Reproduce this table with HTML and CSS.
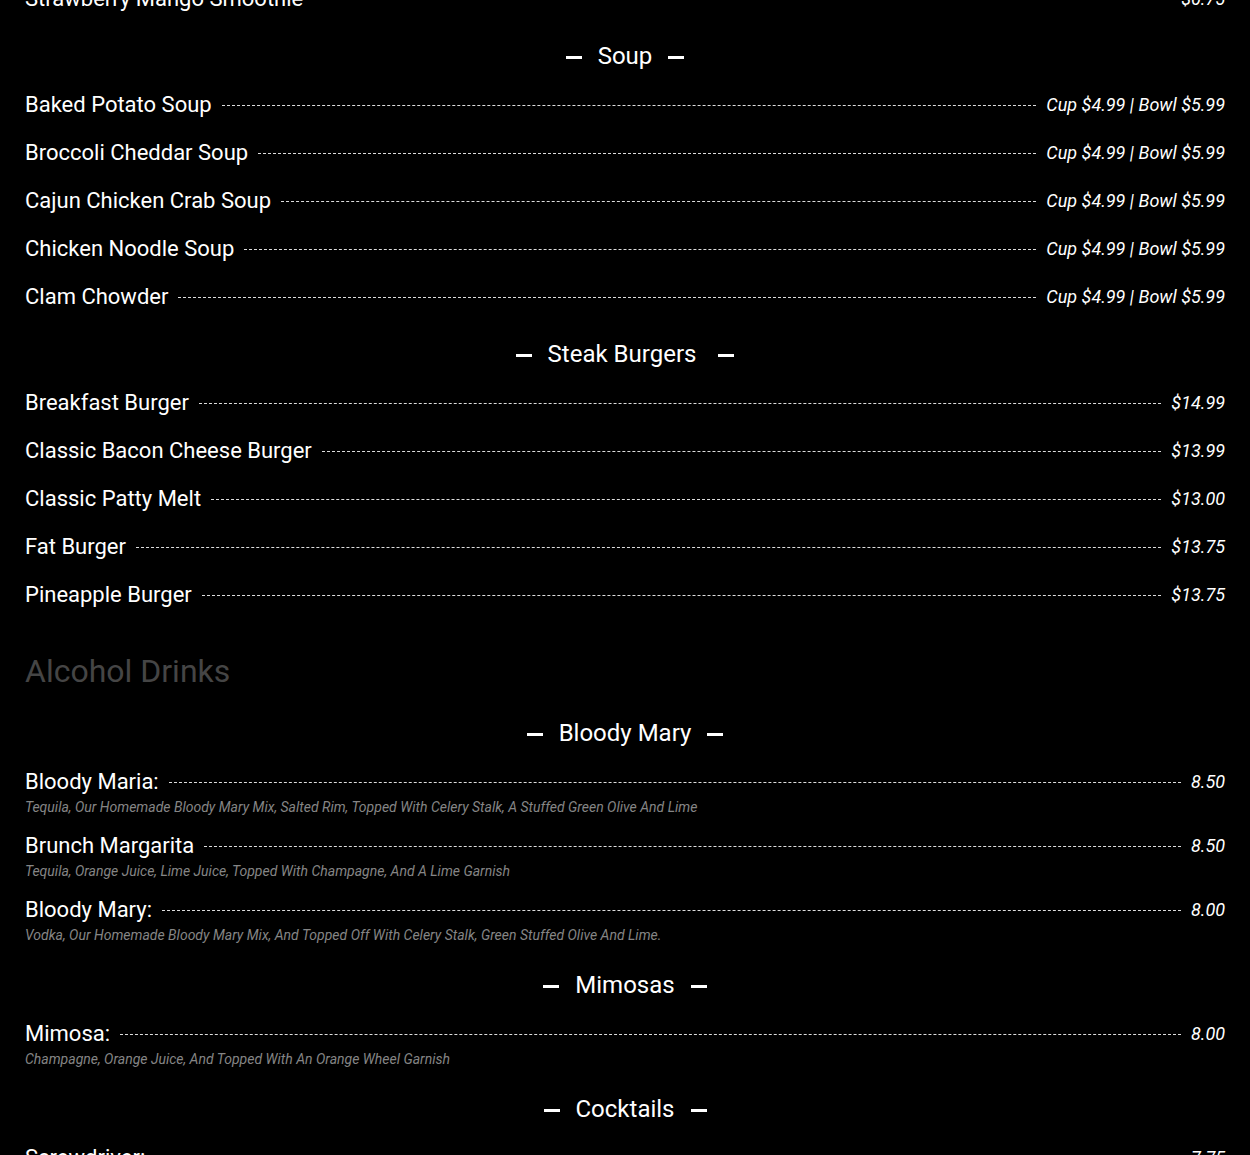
FILE: index.html
```html
<!DOCTYPE html>
<html lang="en">
<head>
<meta charset="utf-8">
<title>Menu</title>
<link rel="stylesheet" href="styles.css">
</head>
<body>
<main class="page">
  <section class="section">
    <ul class="list">
      <li class="item"><div class="row"><span class="name">Strawberry Mango Smoothie</span><span class="dots"></span><span class="price">$6.75</span></div></li>
    </ul>
  </section>

  <section class="section">
    <h3 class="cat">Soup</h3>
    <ul class="list">
      <li class="item"><div class="row"><span class="name">Baked Potato Soup</span><span class="dots"></span><span class="price">Cup $4.99 | Bowl $5.99</span></div></li>
      <li class="item"><div class="row"><span class="name">Broccoli Cheddar Soup</span><span class="dots"></span><span class="price">Cup $4.99 | Bowl $5.99</span></div></li>
      <li class="item"><div class="row"><span class="name">Cajun Chicken Crab Soup</span><span class="dots"></span><span class="price">Cup $4.99 | Bowl $5.99</span></div></li>
      <li class="item"><div class="row"><span class="name">Chicken Noodle Soup</span><span class="dots"></span><span class="price">Cup $4.99 | Bowl $5.99</span></div></li>
      <li class="item"><div class="row"><span class="name">Clam Chowder</span><span class="dots"></span><span class="price">Cup $4.99 | Bowl $5.99</span></div></li>
    </ul>
  </section>

  <section class="section">
    <h3 class="cat">Steak Burgers&nbsp;</h3>
    <ul class="list">
      <li class="item"><div class="row"><span class="name">Breakfast Burger</span><span class="dots"></span><span class="price">$14.99</span></div></li>
      <li class="item"><div class="row"><span class="name">Classic Bacon Cheese Burger</span><span class="dots"></span><span class="price">$13.99</span></div></li>
      <li class="item"><div class="row"><span class="name">Classic Patty Melt</span><span class="dots"></span><span class="price">$13.00</span></div></li>
      <li class="item"><div class="row"><span class="name">Fat Burger</span><span class="dots"></span><span class="price">$13.75</span></div></li>
      <li class="item"><div class="row"><span class="name">Pineapple Burger</span><span class="dots"></span><span class="price">$13.75</span></div></li>
    </ul>
  </section>

  <h2 class="group">Alcohol Drinks</h2>

  <section class="section section-desc">
    <h3 class="cat">Bloody Mary</h3>
    <ul class="list list-desc">
      <li class="item"><div class="row"><span class="name">Bloody Maria:</span><span class="dots"></span><span class="price">8.50</span></div><p class="desc">Tequila, Our Homemade Bloody Mary Mix, Salted Rim, Topped With Celery Stalk, A Stuffed Green Olive And Lime</p></li>
      <li class="item"><div class="row"><span class="name">Brunch Margarita</span><span class="dots"></span><span class="price">8.50</span></div><p class="desc">Tequila, Orange Juice, Lime Juice, Topped With Champagne, And A Lime Garnish</p></li>
      <li class="item"><div class="row"><span class="name">Bloody Mary:</span><span class="dots"></span><span class="price">8.00</span></div><p class="desc">Vodka, Our Homemade Bloody Mary Mix, And Topped Off With Celery Stalk, Green Stuffed Olive And Lime.</p></li>
    </ul>
  </section>

  <section class="section section-desc">
    <h3 class="cat">Mimosas</h3>
    <ul class="list list-desc">
      <li class="item"><div class="row"><span class="name">Mimosa:</span><span class="dots"></span><span class="price">8.00</span></div><p class="desc">Champagne, Orange Juice, And Topped With An Orange Wheel Garnish</p></li>
    </ul>
  </section>

  <section class="section section-desc">
    <h3 class="cat">Cocktails</h3>
    <ul class="list list-desc">
      <li class="item"><div class="row"><span class="name">Screwdriver:</span><span class="dots"></span><span class="price">7.75</span></div><p class="desc">Vodka And Orange Juice</p></li>
    </ul>
  </section>
</main>
</body>
</html>
```

FILE: styles.css
```css
html, body {
  margin: 0;
  padding: 0;
  background: #000;
}

body {
  font-family: Roboto, "Liberation Sans", sans-serif;
  color: #fff;
  overflow: hidden;
}

.page {
  margin-top: -15px;
  padding: 0 25px;
  display: flex;
  flex-direction: column;
}

.section {
  display: flex;
  flex-direction: column;
  margin-bottom: 27px;
}

.section-desc {
  margin-bottom: 26px;
}

.cat {
  margin: 0 0 19px;
  font-size: 24px;
  font-weight: 400;
  line-height: 32px;
  display: flex;
  justify-content: center;
  align-items: center;
  gap: 16px;
  white-space: pre;
}

.cat::before,
.cat::after {
  content: "";
  width: 16px;
  height: 3px;
  background: #fff;
  margin-top: 2px;
}

.list {
  list-style: none;
  margin: 0;
  padding: 0;
  display: flex;
  flex-direction: column;
  gap: 20px;
}

.list-desc {
  gap: 17px;
}

.row {
  display: flex;
  align-items: center;
  height: 28px;
}

.name {
  font-size: 22px;
  line-height: 28px;
  white-space: nowrap;
}

.dots {
  flex: 1;
  margin: 1px 10px 0;
  border-bottom: 1px dashed #ddd;
  height: 0;
}

.price {
  font-size: 18px;
  font-style: italic;
  line-height: 28px;
  white-space: nowrap;
}

.desc {
  margin: 3px 0 0;
  font-size: 14px;
  line-height: 16px;
  font-style: italic;
  color: #858585;
}

.group {
  margin: 15px 0 26px;
  font-size: 32px;
  font-weight: 400;
  line-height: 40px;
  color: #454545;
}
```
